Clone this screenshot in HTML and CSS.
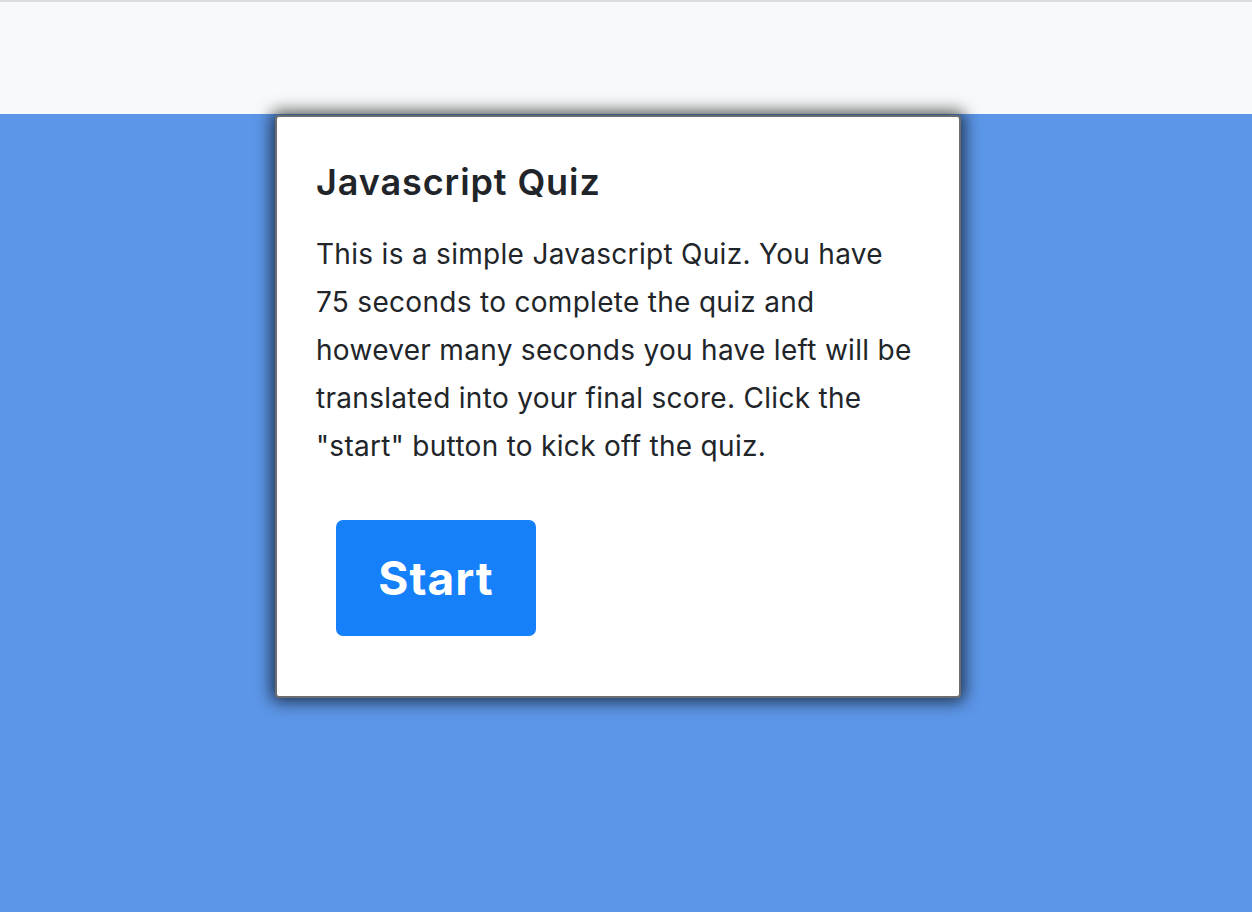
FILE: index.html
```html
<!DOCTYPE html>
<html lang="en">
<head>
<meta charset="utf-8">
<title>Javascript Quiz</title>
<link rel="stylesheet" href="styles.css">
</head>
<body>
<header class="topbar"></header>
<main class="stage">
  <section class="card">
    <h1 class="card-title">Javascript Quiz</h1>
    <p class="card-text">This is a simple Javascript Quiz. You have 75 seconds to complete the quiz and however many seconds you have left will be translated into your final score. Click the "start" button to kick off the quiz.</p>
    <button class="start-btn">Start</button>
  </section>
</main>
</body>
</html>
```

FILE: styles.css
```css
* { box-sizing: border-box; }
html, body { margin: 0; padding: 0; height: 100%; }
body {
  font-family: Inter, "Noto Sans", sans-serif;
  color: #212529;
  background: #5c96e8;
  display: flex;
  flex-direction: column;
}
.topbar {
  height: 114px;
  flex: none;
  background: #f8f9fa;
  border-top: 2px solid #dcdde0;
}
.stage {
  flex: 1;
  display: flex;
  justify-content: center;
  align-items: flex-start;
}
.card {
  width: 686px;
  height: 583px;
  margin-top: 1px;
  margin-right: 16px;
  background: #fff;
  border: 2px solid #6b6d70;
  border-radius: 4px;
  box-shadow: 0 0 16px 4px rgba(0,0,0,0.65);
  padding: 39px 41px 0 39px;
}
.card-title {
  margin: 0 0 22px 0;
  font-size: 36px;
  font-weight: 600;
  line-height: 52px;
  letter-spacing: 0.9px;
}
.card-text {
  margin: 0;
  font-size: 28px;
  line-height: 48px;
  letter-spacing: 0.3px;
}
.start-btn {
  margin: 50px 0 0 20px;
  width: 200px;
  height: 116px;
  border: none;
  border-radius: 7px;
  background: #1680fb;
  color: #fff;
  font-family: Inter, "Noto Sans", sans-serif;
  font-size: 46px;
  font-weight: 700;
  letter-spacing: 1px;
  padding: 0;
}
```
